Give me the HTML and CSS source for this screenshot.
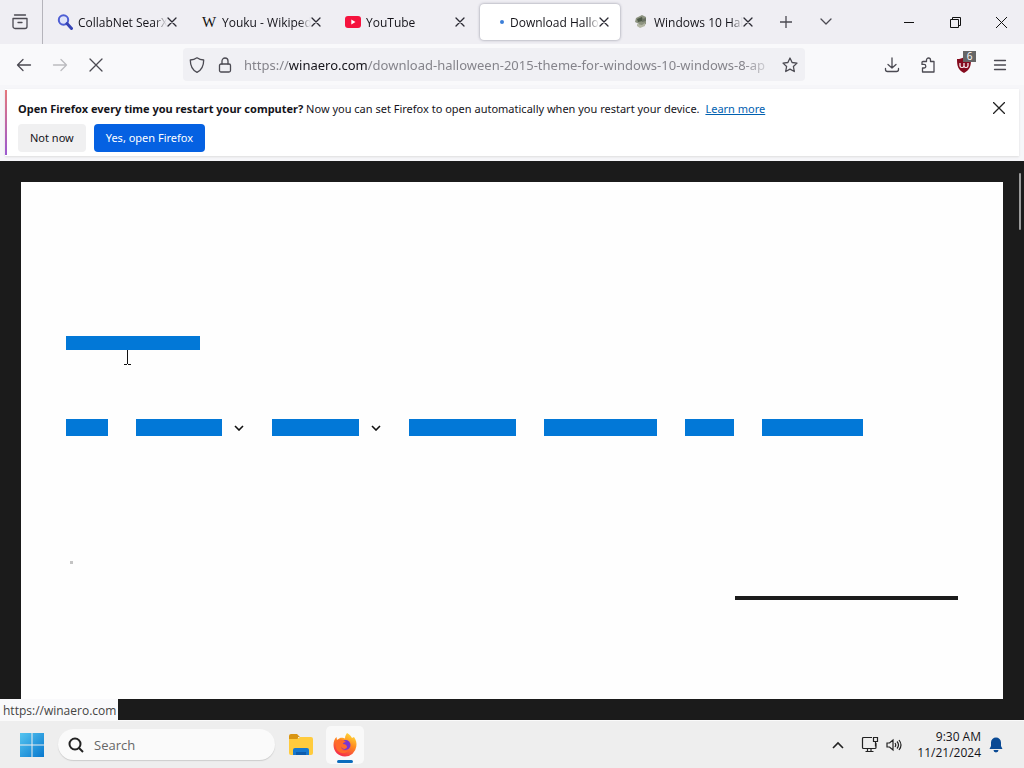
FILE: index.html
```html
<!DOCTYPE html>
<html lang="en">
<head>
<meta charset="utf-8">
<meta name="viewport" content="width=device-width, initial-scale=1">
<title>Firefox</title>
<link rel="stylesheet" href="styles.css">
</head>
<body>
<div class="desktop">
  <header class="tabbar">
    <button class="view" aria-label="Firefox View">
      <svg width="18" height="18" viewBox="0 0 18 18" class="line"><path d="M3.5 2h11M2 5.500h14v8a2 2 0 0 1-2 2H4a2 2 0 0 1-2-2zM7 9.500h4"/></svg>
    </button>
    <div class="tabs">
      <div class="tab">
        <svg class="favicon" viewBox="0 0 16 16" width="16" height="16"><circle cx="6.500" cy="6" r="4.700" fill="#dfe4fa" stroke="#4f5fd4" stroke-width="2"/><path d="M10 9.500l4.500 5" stroke="#3543b5" stroke-width="3" stroke-linecap="round"/></svg>
        <span class="label">CollabNet SearX</span>
        <button class="close" aria-label="Close tab"><svg width="10" height="10" viewBox="0 0 10 10" class="line"><path d="M1 1l8 8M9 1l-8 8"/></svg></button>
      </div>
      <div class="tab">
        <span class="favicon wiki" aria-hidden="true">W</span>
        <span class="label">Youku - Wikiped</span>
        <button class="close" aria-label="Close tab"><svg width="10" height="10" viewBox="0 0 10 10" class="line"><path d="M1 1l8 8M9 1l-8 8"/></svg></button>
      </div>
      <div class="tab">
        <svg class="favicon" viewBox="0 0 16 16" width="16" height="16"><rect x="0" y="2" width="16" height="12" rx="3" fill="#f5123d"/><path d="M6.300 5.500v5l4.200-2.500z" fill="#fff"/></svg>
        <span class="label">YouTube</span>
        <button class="close" aria-label="Close tab"><svg width="10" height="10" viewBox="0 0 10 10" class="line"><path d="M1 1l8 8M9 1l-8 8"/></svg></button>
      </div>
      <div class="tab active">
        <svg class="favicon" viewBox="0 0 16 16" width="16" height="16"><circle cx="13" cy="8" r="2" fill="#3c7fd8"/></svg>
        <span class="label">Download Hallo</span>
        <button class="close" aria-label="Close tab"><svg width="10" height="10" viewBox="0 0 10 10" class="line"><path d="M1 1l8 8M9 1l-8 8"/></svg></button>
      </div>
      <div class="tab">
        <svg class="favicon" viewBox="0 0 16 16" width="16" height="16"><path d="M3 4l6-3 4 2v7l-5 3-3-2 1-1-4-2z" fill="#8d9380"/><path d="M4 5l5-2 1 4-5 1z" fill="#4f5a48"/><path d="M4 10l5 1 3-2v3l-5 2-3-2z" fill="#b4b7a4"/><path d="M9 5l4-1v3l-4 1z" fill="#697062"/></svg>
        <span class="label">Windows 10 Hal</span>
        <button class="close" aria-label="Close tab"><svg width="10" height="10" viewBox="0 0 10 10" class="line"><path d="M1 1l8 8M9 1l-8 8"/></svg></button>
      </div>
    </div>
    <button class="tabtool" aria-label="New tab"><svg width="12" height="12" viewBox="0 0 12 12" class="line"><path d="M6 0v12M0 6h12"/></svg></button>
    <button class="tabtool" aria-label="List all tabs"><svg width="12" height="8" viewBox="0 0 12 8" class="line"><path d="M1 1l5 5 5-5"/></svg></button>
    <div class="window-controls">
      <button aria-label="Minimize"><svg width="10" height="10" viewBox="0 0 10 10" class="thin"><path d="M0 5.500h10"/></svg></button>
      <button aria-label="Restore"><svg width="11" height="11" viewBox="0 0 11 11" class="thin"><path d="M.5 2.500h8v8h-8zM2.500 2.500v-2h8v8h-2"/></svg></button>
      <button aria-label="Close"><svg width="11" height="11" viewBox="0 0 11 11" class="thin"><path d="M0 0l11 11M11 0L0 11"/></svg></button>
    </div>
  </header>

  <div class="navbar">
    <div class="tools">
      <button aria-label="Back"><svg width="16" height="14" viewBox="0 0 16 14" class="line"><path d="M7 1.500L1.500 7 7 12.500M1.500 7h13"/></svg></button>
      <button aria-label="Forward" disabled><svg width="16" height="14" viewBox="0 0 16 14" class="line"><path d="M9 1.500L14.500 7 9 12.500M14.500 7h-13"/></svg></button>
      <button aria-label="Stop"><svg width="14" height="14" viewBox="0 0 14 14" class="line"><path d="M1 1l12 12M13 1L1 13"/></svg></button>
    </div>
    <div class="urlbar">
      <button aria-label="Tracking protection"><svg width="16" height="16" viewBox="0 0 16 16" class="line"><path d="M8 .800c2 1.500 4.200 2.200 6.700 2.200 0 6-1.700 10-6.700 12.300C3 13 1.300 9 1.300 3 3.800 3 6 2.300 8 .800z"/></svg></button>
      <button aria-label="Site information"><svg width="14" height="16" viewBox="0 0 14 16" class="line"><rect x="1.500" y="7" width="11" height="8" rx="1.500"/><path d="M4 7V4a3 3 0 0 1 6 0v3"/></svg></button>
      <a class="address" href="#">https://<b>winaero.com</b>/download-halloween-2015-theme-for-windows-10-windows-8-ap</a>
      <button aria-label="Bookmark this page"><svg width="16" height="16" viewBox="0 0 16 16" class="line"><path d="M8 1l2.100 4.500 4.900.600-3.600 3.400.900 5L8 12.100l-4.300 2.400.900-5L1 6.100l4.900-.600z"/></svg></button>
    </div>
    <div class="tools">
      <button aria-label="Downloads"><svg width="16" height="16" viewBox="0 0 16 16" class="line"><path d="M8 1v10M4 7.500L8 11l4-3.500M1.500 11.500v1a2 2 0 0 0 2 2h9a2 2 0 0 0 2-2v-1"/></svg></button>
      <button aria-label="Extensions"><svg width="16" height="16" viewBox="0 0 16 16" class="line"><path d="M3 4.500h3.500V3a2 2 0 0 1 4 0v1.500H14V15H2.500v-4H4a1.800 1.800 0 0 0 0-3.600H2V5.500a1 1 0 0 1 1-1z"/></svg></button>
      <button class="ublock" aria-label="uBlock Origin">
        <svg width="16" height="16" viewBox="0 0 16 16"><path d="M8 0c2 1.500 4 2 7 2 0 7-1 11-7 14C2 13 1 9 1 2c3 0 5-.500 7-2z" fill="#850b1e"/><path d="M4 6v3q0 1.500 2 1.500T8 9V6v3q0 1.500 2 1.500T12 9V6" fill="none" stroke="#fff" stroke-width="1.200"/></svg>
        <span class="badge">6</span>
      </button>
      <button aria-label="Menu"><svg width="14" height="12" viewBox="0 0 14 12" class="line"><path d="M1.500 1.500h11M1.500 6h11M1.500 10.500h11"/></svg></button>
    </div>
  </div>

  <div class="notice-wrap">
    <section class="notice">
      <p><strong>Open Firefox every time you restart your computer?</strong> Now you can set Firefox to open automatically when you restart your device. <a href="#">Learn more</a></p>
      <div class="actions"><button>Not now</button><button class="primary">Yes, open Firefox</button></div>
      <button class="dismiss" aria-label="Dismiss"><svg width="12" height="12" viewBox="0 0 12 12" class="line"><path d="M0 0l12 12M12 0L0 12"/></svg></button>
    </section>
  </div>

  <main class="viewport">
    <article class="page">
      <a class="block brand" href="#" aria-label="Winaero"></a>
      <nav class="menu">
        <a class="block home" href="#" aria-label="Home"></a>
        <span class="group"><a class="block w86" href="#" aria-label="Section one"></a><svg width="10" height="6" viewBox="0 0 10 6"><path d="M1 1l4 4 4-4"/></svg></span>
        <span class="group"><a class="block w87" href="#" aria-label="Section two"></a><svg width="10" height="6" viewBox="0 0 10 6"><path d="M1 1l4 4 4-4"/></svg></span>
        <a class="block w107" href="#" aria-label="Section three"></a>
        <a class="block w113" href="#" aria-label="Section four"></a>
        <a class="block w49" href="#" aria-label="Section five"></a>
        <a class="block w101" href="#" aria-label="Section six"></a>
      </nav>
      <i class="speck"></i>
      <hr class="rule">
    </article>
    <i class="scroll-thumb"></i>
    <div class="status">https://winaero.com</div>
    <svg class="cursor" width="8" height="15" viewBox="0 0 8 15"><path d="M4.500 0v14M1 14.500h3M5 14.500h3"/></svg>
  </main>

  <footer class="taskbar">
    <button class="start" aria-label="Start"><svg width="24" height="24" viewBox="0 0 24 24"><defs><linearGradient id="win" gradientUnits="userSpaceOnUse" x1="0" y1="0" x2="24" y2="24"><stop offset="0" stop-color="#55c5f0"/><stop offset="1" stop-color="#0878ce"/></linearGradient></defs><path d="M0 0h11.500v11.500H0zM12.500 0H24v11.500H12.500zM0 12.500h11.500V24H0zM12.500 12.500H24V24H12.500z" fill="url(#win)"/></svg></button>
    <label class="search"><svg width="16" height="16" viewBox="0 0 16 16"><circle cx="7" cy="7" r="5.500"/><path d="M11 11l4 4"/></svg><input type="text" placeholder="Search" aria-label="Search"></label>
    <button class="app" aria-label="File Explorer"><svg width="26" height="24" viewBox="0 0 26 24"><path d="M1 3q0-2 2-2h6l3 3h-2v6H1z" fill="#d99513"/><path d="M1 6h8l3-2h11q2 0 2 2v14q0 2-2 2H3q-2 0-2-2z" fill="#ffcb3d"/><path d="M5 22v-5q0-2 2-2h12q2 0 2 2v5z" fill="#1678cf"/><path d="M8 19h10v3H8z" fill="#0d5cad"/></svg></button>
    <button class="app current" aria-label="Firefox"><svg width="24" height="24" viewBox="0 0 24 24"><defs><linearGradient id="fx" x1=".8" y1="0" x2=".3" y2="1"><stop offset="0" stop-color="#ffe03a"/><stop offset=".45" stop-color="#ff8a20"/><stop offset="1" stop-color="#f4264f"/></linearGradient></defs><path d="M14 0c3 1.500 4 3.500 5 5l2-1c2 3 3 6 2.300 9.500A11.400 11.400 0 0 1 12 23.500C5.500 23.500.500 18.500.500 12c0-3.500 1-6 3-8l.500 3 3-2c2-.500 4 0 5 .500C12 3 13 2 14 0z" fill="url(#fx)"/><circle cx="12.500" cy="12" r="5" fill="#7a35d2"/><path d="M4 7c3-1 6-1 9 2-2 0-3 1-3 2 2 0 4 1 4 3s-4 3-6 0c0 4 5 5 8 3-3 5-12 4-13-3-.500-3 0-5 1-7z" fill="#ff6a2b"/></svg></button>
    <div class="tray">
      <button class="up" aria-label="Hidden icons"><svg width="12" height="8" viewBox="0 0 12 8"><path d="M1 7l5-5 5 5"/></svg></button>
      <button class="net" aria-label="Network"><svg width="18" height="17" viewBox="0 0 18 17"><path d="M11 1.500H2.500a1 1 0 0 0-1 1v9a1 1 0 0 0 1 1h11.500a1 1 0 0 0 1-1V7M6.500 12.500v3M10 12.500v3M4.500 15.500h8M12.500 1.500h4v4h-4zM14.500 5.500v5"/></svg></button>
      <button class="vol" aria-label="Volume"><svg width="16" height="14" viewBox="0 0 16 14"><path d="M1 5h2.500L7 2v10L3.500 9H1zM9 5q1.500 2 0 4M11 3.500q3 3.500 0 7M13 2q4 5 0 10"/></svg></button>
      <button class="clock"><span>9:30 AM</span><span>11/21/2024</span></button>
      <button class="bell" aria-label="Notifications"><svg width="14" height="16" viewBox="0 0 14 16"><path d="M7 .500a5 5 0 0 1 5 5V9l1.500 3H.500L2 9V5.500a5 5 0 0 1 5-5zM4.500 13h5a2.500 2.500 0 0 1-5 0z"/></svg></button>
    </div>
  </footer>
</div>
</body>
</html>
```
FILE: styles.css
```css
* { box-sizing: border-box; }
body { margin: 0; font: 12px/16px "Open Sans", "Noto Sans", sans-serif; color: #15141a; }
button { border: 0; padding: 0; background: none; font: inherit; color: inherit; display: flex; align-items: center; justify-content: center; flex-shrink: 0; }
svg { flex-shrink: 0; }
.line { fill: none; stroke: #4b4a52; stroke-width: 1.3; stroke-linecap: round; stroke-linejoin: round; }
.thin { fill: none; stroke: #111; stroke-width: 1; }
.desktop { display: flex; flex-direction: column; min-height: 100vh; background: #f9f9fb; }

.tabbar { display: flex; height: 44px; background: #efeef3; }
.view { width: 43px; border-right: 1px solid #b5b4bb; padding-right: 2px; }
.tabs { display: flex; flex: 0 1 723px; min-width: 0; padding-left: 3px; }
.tab { flex: 1 1 0; min-width: 0; display: flex; align-items: center; margin: 4px 2px; padding: 0 8px 0 9px; border-radius: 4px; }
.tab.active { background: #fff; box-shadow: 0 0 3px #8f8f9d; }
.favicon { width: 16px; flex-shrink: 0; }
.wiki { font: 15px/16px "Liberation Serif", serif; text-align: center; color: #111; }
.label { flex: 1; min-width: 0; margin-left: 5px; padding-top: 2px; overflow: hidden; white-space: nowrap; mask-image: linear-gradient(to left, transparent, #000 12px); }
.close { width: 16px; height: 24px; margin-left: -3px; }
.close .line { stroke: #2b2a33; }
.tabtool { width: 40px; }
.window-controls { display: flex; margin-left: auto; }
.window-controls button { width: 46px; }

.navbar { display: flex; justify-content: space-between; height: 41px; padding: 0 6px; }
.tools { display: flex; }
.tools button { width: 36px; }
.tools button:disabled { opacity: .35; }
.urlbar { flex: 0 1 622px; min-width: 0; display: flex; align-items: center; margin: 4px 0; background: #f0f0f4; border-radius: 4px; }
.urlbar button { width: 28px; height: 32px; }
.urlbar button:last-child { width: 30px; }
.address { flex: 1; min-width: 0; margin-left: 5px; overflow: hidden; white-space: nowrap; font: 13px/24px "Noto Sans", sans-serif; color: #85848b; text-decoration: none; mask-image: linear-gradient(to left, transparent, #000 32px); }
.address b { font-weight: 400; color: #15141a; }
.ublock { position: relative; }
.badge { position: absolute; top: 7px; right: 6px; width: 13px; height: 11px; background: #666; color: #fff; font-size: 10px; line-height: 11px; text-align: center; }

.notice-wrap { padding: 4px 5px 5px; background: #f6f6f9; }
.notice { position: relative; padding: 11px 44px 3px 11px; border: 1px solid #f0f0f2; border-left: 2px solid; border-image: linear-gradient(#e5777c, #9b59d0) 0 0 0 2; background: #fff; box-shadow: 0 1px 2px #ddd; font: 11px/16px "Noto Sans", sans-serif; }
.notice p { margin: 0 0 7px; }
.notice p a { margin-left: 3px; color: #0060b0; }
.actions { display: flex; gap: 8px; }
.actions button { height: 28px; padding: 0 12px; border-radius: 4px; background: #f0f0f1; }
.actions .primary { background: #0561e2; color: #fff; }
.dismiss { position: absolute; top: 6px; right: 7px; width: 24px; height: 24px; }
.dismiss .line { stroke: #222; }

.viewport { position: relative; flex: 1; display: flex; padding: 21px; background: #1b1b1b; }
.page { flex: 1; min-width: 0; display: flex; flex-direction: column; padding: 154px 45px 99px; background: #fefefe; }
.block { height: 17px; background: #0278d7; flex-shrink: 0; }
.brand { width: 134px; height: 14px; }
.menu { display: flex; flex-wrap: wrap; gap: 28px; margin-top: 69px; }
.group { display: flex; align-items: center; gap: 12px; }
.group svg { fill: none; stroke: #111; stroke-width: 1.6; }
.home { width: 42px; }
.w86 { width: 86px; }
.w87 { width: 87px; }
.w107 { width: 107px; }
.w113 { width: 113px; }
.w49 { width: 49px; }
.w101 { width: 101px; }
.speck { width: 3px; height: 3px; margin: 125px 0 0 4px; background: #c4c4c4; }
.rule { width: 25%; height: 4px; margin: auto 0 0 auto; border: 0; background: #1b1b1b; }
.scroll-thumb { position: absolute; top: 12px; right: 3px; width: 2px; height: 57px; background: #9b9b9b; border-radius: 1px; }
.status { position: absolute; left: 0; bottom: 0; padding: 4px 2px 1px 3px; background: #f9f9fb; color: #444; }
.cursor { position: absolute; left: 123px; top: 189px; fill: none; stroke: #111; }

.taskbar { display: flex; align-items: center; height: 48px; padding: 0 21px 0 14px; background: #eee; border-top: 1px solid #fafafa; }
.start { width: 36px; height: 40px; }
.search { display: flex; align-items: center; gap: 10px; flex: 0 1 217px; min-width: 0; height: 31px; margin: 0 7px 0 8px; padding: 0 10px; border-radius: 16px; background: #fafafa; box-shadow: 0 1px 1px #ccc; }
.search svg { fill: none; stroke: #222; stroke-width: 2; }
.search input { width: 100%; min-width: 0; border: 0; outline: 0; padding: 0; background: none; font: 13px/20px "Open Sans", sans-serif; }
.search input::placeholder { color: #666; opacity: 1; }
.app { position: relative; width: 38px; height: 38px; margin-right: 6px; border-radius: 5px; }
.current { background: #f9f9f9; }
.current::after { content: ""; position: absolute; bottom: 1px; left: 11px; width: 16px; height: 3px; border-radius: 2px; background: #0b6cbd; }
.tray { display: flex; align-items: center; margin-left: auto; }
.tray svg { fill: none; stroke: #222; stroke-width: 1.2; }
.up { width: 32px; height: 40px; }
.up svg { stroke-width: 1.6; }
.net { width: 32px; height: 40px; }
.vol { width: 16px; height: 40px; }
.clock { flex-direction: column; align-items: flex-end; min-width: 79px; margin-right: 8px; }
.tray .bell svg { fill: #0a4a94; stroke: none; }
```
